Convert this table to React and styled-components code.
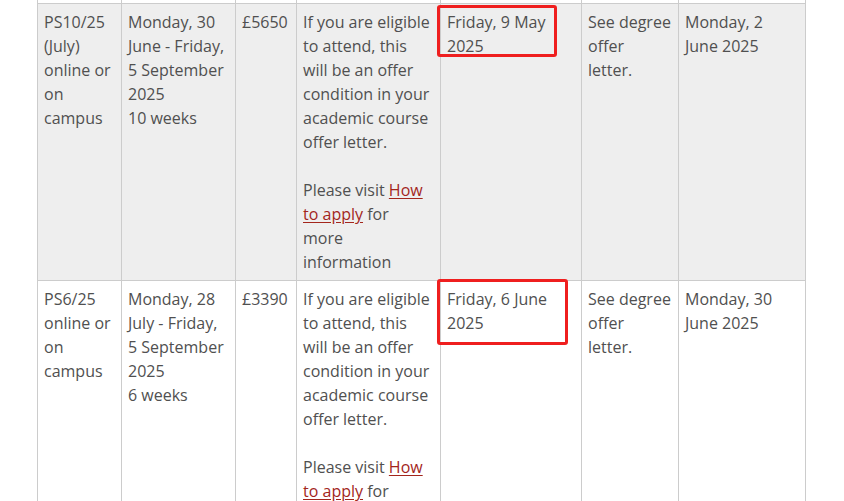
import React from "react";
import styled, { createGlobalStyle } from "styled-components";

const Global = createGlobalStyle`
  html, body { margin: 0; padding: 0; background: #ffffff; overflow: hidden; }
  body { font-family: "Open Sans", "Liberation Sans", sans-serif; }
`;

const Page = styled.div`
  padding: 0 38px 0 37px;
`;

const Table = styled.table`
  border-collapse: collapse;
  table-layout: fixed;
  width: 768px;
  color: #505050;
  font-family: "Open Sans", "Liberation Sans", sans-serif;
  font-size: 16px;
  line-height: 24px;
`;

const Row = styled.tr`
  background: ${(p) => (p.$shaded ? "#eeeeee" : "#ffffff")};
`;

const SpacerCell = styled.td`
  height: 3px;
  padding: 0;
  border: 1px solid #cccccc;
  border-top: none;
`;

const Cell = styled.td`
  position: relative;
  vertical-align: top;
  padding: 6px 8px 6px 6px;
  border: 1px solid #cccccc;
`;

const NoWrap = styled.span`
  white-space: nowrap;
`;

const Para = styled.p`
  margin: 0 0 24px;
  &:last-child { margin-bottom: 0; }
`;

const Link = styled.a`
  color: #a3261c;
  text-decoration: underline;
  text-underline-offset: 2px;
`;

const Annotation = styled.span`
  position: absolute;
  left: -4px;
  top: ${(p) => p.$top}px;
  width: ${(p) => p.$w}px;
  height: ${(p) => p.$h}px;
  box-sizing: border-box;
  border: 3px solid #ef1f1f;
  border-radius: 3px;
  pointer-events: none;
`;

const widths = [84, 114, 61, 144, 141, 97, 127];

const rows = [
  {
    code: ["PS10/25", "(July)", "online or on campus"],
    dates: ["Monday, 30 June - Friday, 5 September 2025", "10 weeks"],
    fee: "£5650",
    deadline: "Friday, 9 May 2025",
    box: { top: 1, w: 120, h: 52 },
    start: "Monday, 2 June 2025",
    shaded: true,
  },
  {
    code: ["PS6/25", "online or on campus"],
    dates: ["Monday, 28 July - Friday, 5 September 2025", "6 weeks"],
    fee: "£3390",
    deadline: "Friday, 6 June 2025",
    box: { top: -2, w: 131, h: 66 },
    start: "Monday, 30 June 2025",
    shaded: false,
  },
];

export default function App() {
  return (
    <Page>
      <Global />
      <Table>
        <colgroup>
          {widths.map((w, i) => (
            <col key={i} style={{ width: w }} />
          ))}
        </colgroup>
        <tbody>
          <tr>
            {widths.map((_, i) => (
              <SpacerCell key={i} />
            ))}
          </tr>
          {rows.map((r) => (
            <Row key={r.code[0]} $shaded={r.shaded}>
              <Cell>
                {r.code.map((c, i) => (
                  <React.Fragment key={i}>
                    {i > 0 && " "}
                    {c}
                  </React.Fragment>
                ))}
              </Cell>
              <Cell>
                {r.dates[0]}
                <br />
                {r.dates[1]}
              </Cell>
              <Cell>{r.fee}</Cell>
              <Cell>
                <Para>
                  If you are eligible to attend, this will be an offer condition in your academic course offer letter.
                </Para>
                <Para>
                  Please visit <Link href="#">How to apply</Link> for more information
                </Para>
              </Cell>
              <Cell>
                {r.deadline}
                <Annotation $top={r.box.top} $w={r.box.w} $h={r.box.h} />
              </Cell>
              <Cell>
                <NoWrap>See degree</NoWrap> offer letter.
              </Cell>
              <Cell>{r.start}</Cell>
            </Row>
          ))}
        </tbody>
      </Table>
    </Page>
  );
}
